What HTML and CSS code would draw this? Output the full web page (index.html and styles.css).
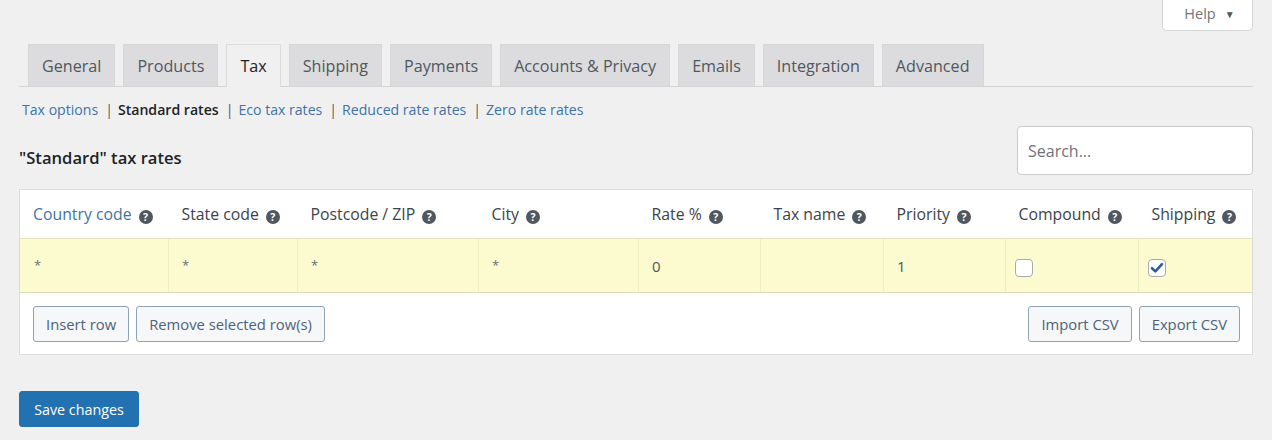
FILE: index.html
```html
<!DOCTYPE html>
<html>
<head>
<meta charset="utf-8">
<link rel="stylesheet" href="styles.css">
</head>
<body>
<div class="page">
  <div class="help-bar">
    <button class="help-btn">Help <span class="caret">▼</span></button>
  </div>
  <nav class="tabs">
    <a class="tab">General</a>
    <a class="tab">Products</a>
    <a class="tab active">Tax</a>
    <a class="tab">Shipping</a>
    <a class="tab">Payments</a>
    <a class="tab">Accounts &amp; Privacy</a>
    <a class="tab">Emails</a>
    <a class="tab">Integration</a>
    <a class="tab">Advanced</a>
  </nav>
  <ul class="subsub">
    <li><a class="link">Tax options</a><span class="sep">|</span></li>
    <li><a class="current">Standard rates</a><span class="sep">|</span></li>
    <li><a class="link">Eco tax rates</a><span class="sep">|</span></li>
    <li><a class="link">Reduced rate rates</a><span class="sep">|</span></li>
    <li><a class="link">Zero rate rates</a></li>
  </ul>
  <div class="title-row">
    <h2 class="title">"Standard" tax rates</h2>
    <input class="search" type="text" placeholder="Search...">
  </div>
  <table class="rates">
    <colgroup>
      <col style="width:149px"><col style="width:129px"><col style="width:181px"><col style="width:160px"><col style="width:122px"><col style="width:123px"><col style="width:122px"><col style="width:133px"><col>
    </colgroup>
    <thead>
      <tr>
        <th><span class="sort">Country code</span><i class="q">?</i></th>
        <th>State code<i class="q">?</i></th>
        <th>Postcode / ZIP<i class="q">?</i></th>
        <th>City<i class="q">?</i></th>
        <th>Rate %<i class="q">?</i></th>
        <th>Tax name<i class="q">?</i></th>
        <th>Priority<i class="q">?</i></th>
        <th>Compound<i class="q">?</i></th>
        <th>Shipping<i class="q">?</i></th>
      </tr>
    </thead>
    <tbody>
      <tr class="rate-row">
        <td><span class="star">*</span></td>
        <td><span class="star">*</span></td>
        <td><span class="star">*</span></td>
        <td><span class="star">*</span></td>
        <td>0</td>
        <td></td>
        <td>1</td>
        <td><span class="cb"></span></td>
        <td><span class="cb checked"><svg width="14" height="12" viewBox="0 0 14 12"><path d="M2 6.2 L5.4 9.4 L12 2.2" fill="none" stroke="#2f5f92" stroke-width="2.6" stroke-linecap="round" stroke-linejoin="round"/></svg></span></td>
      </tr>
    </tbody>
    <tfoot>
      <tr>
        <td colspan="9">
          <div class="foot">
            <div class="group">
              <button class="btn">Insert row</button>
              <button class="btn">Remove selected row(s)</button>
            </div>
            <div class="group">
              <button class="btn">Import CSV</button>
              <button class="btn">Export CSV</button>
            </div>
          </div>
        </td>
      </tr>
    </tfoot>
  </table>
  <div class="save-wrap">
    <button class="save">Save changes</button>
  </div>
</div>
</body>
</html>
```

FILE: styles.css
```css
* { box-sizing: border-box; }
html, body { margin: 0; padding: 0; }
body {
  background: #f0f0f1;
  font-family: "Open Sans", "Noto Sans", sans-serif;
  color: #3c434a;
  width: 1272px;
  height: 440px;
  overflow: hidden;
}
.page { padding: 0 19px 0 19px; }

.help-bar { display: flex; justify-content: flex-end; }
.help-btn {
  width: 91px;
  height: 32px;
  margin-top: -1px;
  background: #fff;
  border: 1px solid #d3d4d6;
  border-top: none;
  border-radius: 0 0 5px 5px;
  font-family: inherit;
  font-size: 14.5px;
  color: #70757a;
  padding: 0 0 2px 4px;
  display: flex;
  align-items: center;
  justify-content: center;
  gap: 9px;
}
.help-btn .caret { font-size: 10px; color: #50575e; }

.tabs {
  display: flex;
  margin-top: 13px;
  padding-left: 1px;
  border-bottom: 1px solid #d3d4d6;
  height: 43px;
}
.tab {
  display: flex;
  align-items: center;
  height: 42px;
  margin-left: 8px;
  padding: 0 13px;
  background: #dcdcde;
  border: 1px solid #d6d7d9;
  border-bottom: none;
  font-size: 16.15px;
  font-weight: 500;
  color: #50575e;
  white-space: nowrap;
}
.tab.active {
  background: #f0f0f1;
  height: 43px;
  color: #1d2327;
  border-color: #dcdcde;
}

.subsub {
  list-style: none;
  margin: 11px 0 0 3px;
  padding: 0;
  display: flex;
  font-size: 14.1px;
  line-height: 24px;
}
.subsub li { display: flex; }
.subsub .link { color: #3f73a8; }
.subsub .current { color: #1d2327; font-weight: 600; }
.subsub .sep { color: #50575e; margin: 0 5px 0 7px; }

.title-row {
  display: flex;
  justify-content: space-between;
  align-items: flex-start;
  margin-top: 4px;
}
.title {
  margin: 20px 0 0 0;
  font-size: 16.6px;
  line-height: 23px;
  font-weight: 600;
  color: #1d2327;
}
.search {
  width: 236px;
  height: 49px;
  border: 1px solid #c9cacc;
  border-radius: 4px;
  background: #fff;
  font-family: inherit;
  font-size: 16px;
  padding: 0 10px;
  color: #3c434a;
}
.search::placeholder { color: #6f7377; }

.rates {
  margin-top: 14px;
  width: 1234px;
  table-layout: fixed;
  border-collapse: collapse;
  background: #fff;
  border: 1px solid #dcdcde;
}
.rates th {
  height: 49px;
  text-align: left;
  font-weight: 400;
  font-size: 15.8px;
  color: #3c434a;
  padding: 0 0 1px 13px;
  white-space: nowrap;
  border-bottom: 1px solid #e6e4c0;
}
.rates th .sort { color: #3f73a8; }
.q {
  display: inline-block;
  width: 14px;
  height: 14px;
  border-radius: 50%;
  background: #50575e;
  color: #fff;
  font-style: normal;
  font-weight: 700;
  font-size: 10.5px;
  line-height: 14px;
  text-align: center;
  margin-left: 7px;
  vertical-align: -1px;
}
.rate-row td {
  background: #fcfbd0;
  height: 54px;
  padding: 0 0 0 13px;
  font-size: 15px;
  color: #50575e;
  border-left: 1px solid #efedc4;
  border-bottom: 1px solid #dedcb8;
}
.rate-row td:first-child { border-left: none; padding-left: 14px; }
.star { font-size: 13px; color: #6a6f73; position: relative; top: -2px; }
.rate-row td:nth-child(8), .rate-row td:nth-child(9) { padding-left: 9px; }
.cb {
  display: inline-flex;
  align-items: center;
  justify-content: center;
  width: 18px;
  height: 18px;
  border: 1px solid #a7aaad;
  border-radius: 4px;
  background: #fff;
  vertical-align: middle;
  position: relative;
  top: 1px;
}
.cb.checked svg { display: block; }

.rates tfoot td { padding: 0; }
.foot {
  display: flex;
  justify-content: space-between;
  align-items: center;
  height: 61px;
  padding: 0 12px 0 13px;
}
.group { display: flex; gap: 7px; }
.btn {
  height: 36px;
  padding: 0 12px;
  background: #f5f7f9;
  border: 1px solid #8ea3b8;
  border-radius: 3px;
  font-family: inherit;
  font-size: 14.8px;
  color: #4d6379;
}

.save-wrap { margin-top: 36px; }
.save {
  height: 36px;
  width: 120px;
  background: #2271b1;
  border: 1px solid #2271b1;
  border-radius: 3px;
  color: #fff;
  font-family: inherit;
  font-size: 14.3px;
  padding: 0;
}
```
